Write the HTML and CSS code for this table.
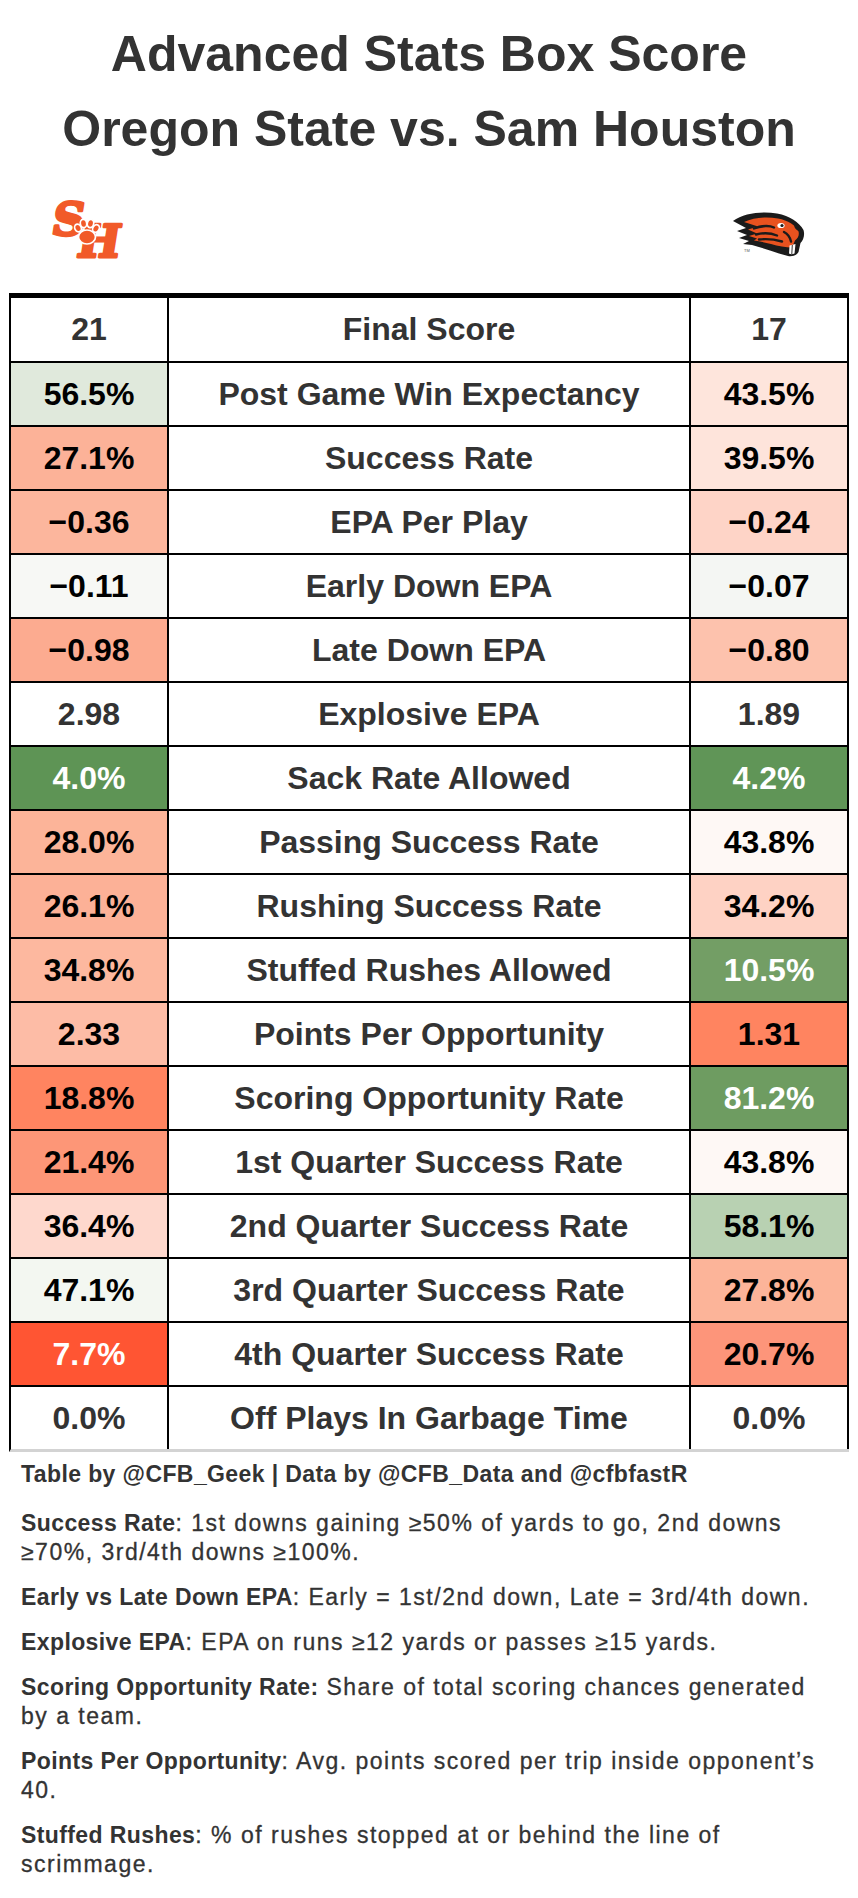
FILE: index.html
```html
<!DOCTYPE html>
<html lang="en">
<head>
<meta charset="utf-8">
<title>Advanced Stats Box Score</title>
<link rel="stylesheet" href="styles.css">
</head>
<body>
<div class="page">
  <h1 class="title">Advanced Stats Box Score<br>Oregon State vs. Sam Houston</h1>

  <div class="logos">
    <svg class="logo-shsu" width="80" height="76" viewBox="0 0 80 76" aria-label="Sam Houston">
      <g transform="skewX(-9)">
        <text x="8" y="43" class="logo-letter" font-size="45">S</text>
        <text x="37" y="65" class="logo-letter" font-size="45">H</text>
      </g>
      <g fill="#f15a29" stroke="#fff" stroke-width="1.7">
        <ellipse cx="38" cy="45" rx="8.5" ry="7"/>
        <ellipse cx="29" cy="36" rx="3.2" ry="4" transform="rotate(-25 29 36)"/>
        <ellipse cx="34.5" cy="31.5" rx="3.2" ry="4.2" transform="rotate(-8 34.5 31.5)"/>
        <ellipse cx="41.5" cy="31.5" rx="3.2" ry="4.2" transform="rotate(10 41.5 31.5)"/>
        <ellipse cx="47" cy="36.5" rx="3.2" ry="4" transform="rotate(28 47 36.5)"/>
      </g>
    </svg>

    <svg class="logo-osu" width="73" height="45" viewBox="0 0 73 45" aria-label="Oregon State">
      <path fill="#1b1b1b" d="M1,9 C12,1 30,-1 45,1.5 C58,4 67,10 71.5,18 C73,23 71.5,28 68.5,31 L66.5,40 C64.5,43.5 60,44.8 56,44 C50,42.5 44,40.5 38,38.5 C32,36.5 26,34.5 20,33 L11,32 L17,29 L7,26 L15,23 L5,19 L14,16 Z"/>
      <path fill="#e8521f" d="M12,10 C22,5.5 34,4.5 46,6.5 C56,8.5 63.5,13 66.5,19.5 C67.5,23 66,26 63,28.5 L60,35.5 C54,35.5 46,34 39,32 C33,30.3 27,29.3 22,28.5 L25,26.5 L17,24 L25,21.5 L16,17.5 L26,14.5 Z"/>
      <path fill="none" stroke="#1b1b1b" stroke-width="2.4" stroke-linecap="round" d="M22,16.5 C30,13.5 38,13.5 42,15.5 M24,22.5 C32,20.5 40,21.5 45,23.5 M27,27.5 C35,26.5 43,27.5 50,29.5 M52,20 C56,22 58,25 59,29.5"/>
      <ellipse cx="49" cy="13.5" rx="3.6" ry="2.6" fill="#fff"/>
      <circle cx="50" cy="13.5" r="1.6" fill="#1b1b1b"/>
      <path fill="#1b1b1b" d="M62,14 C66,15 68,17 68.5,19 C66,19 63.5,18 62,14 Z"/>
      <path fill="#fff" d="M57.5,33.5 L63.5,32 L62.5,41.5 C60.5,42.5 58.5,42.5 57,41.5 Z"/>
      <path stroke="#1b1b1b" stroke-width="0.9" d="M60.3,33 L59.8,42"/>
      <text x="12" y="40" class="tm">TM</text>
    </svg>
  </div>

  <div class="box">
    <div class="cell head">21</div>
    <div class="cell head">Final Score</div>
    <div class="cell head">17</div>

    <div class="cell num" style="background:#e0e9dc">56.5%</div>
    <div class="cell">Post Game Win Expectancy</div>
    <div class="cell num" style="background:#fee5dc">43.5%</div>

    <div class="cell num" style="background:#fcb298">27.1%</div>
    <div class="cell">Success Rate</div>
    <div class="cell num" style="background:#fee4db">39.5%</div>

    <div class="cell num" style="background:#fcb69d">−0.36</div>
    <div class="cell">EPA Per Play</div>
    <div class="cell num" style="background:#fed4c7">−0.24</div>

    <div class="cell num" style="background:#f7f8f5">−0.11</div>
    <div class="cell">Early Down EPA</div>
    <div class="cell num" style="background:#f4f6f3">−0.07</div>

    <div class="cell num" style="background:#fcab90">−0.98</div>
    <div class="cell">Late Down EPA</div>
    <div class="cell num" style="background:#fdc2ad">−0.80</div>

    <div class="cell">2.98</div>
    <div class="cell">Explosive EPA</div>
    <div class="cell">1.89</div>

    <div class="cell light" style="background:#5e9455">4.0%</div>
    <div class="cell">Sack Rate Allowed</div>
    <div class="cell light" style="background:#609557">4.2%</div>

    <div class="cell num" style="background:#fcb499">28.0%</div>
    <div class="cell">Passing Success Rate</div>
    <div class="cell num" style="background:#fef8f5">43.8%</div>

    <div class="cell num" style="background:#fcb197">26.1%</div>
    <div class="cell">Rushing Success Rate</div>
    <div class="cell num" style="background:#fed2c4">34.2%</div>

    <div class="cell num" style="background:#fdb89f">34.8%</div>
    <div class="cell">Stuffed Rushes Allowed</div>
    <div class="cell light" style="background:#739e65">10.5%</div>

    <div class="cell num" style="background:#fdbca6">2.33</div>
    <div class="cell">Points Per Opportunity</div>
    <div class="cell num" style="background:#ff8460">1.31</div>

    <div class="cell num" style="background:#ff8460">18.8%</div>
    <div class="cell">Scoring Opportunity Rate</div>
    <div class="cell light" style="background:#6e9c61">81.2%</div>

    <div class="cell num" style="background:#fd9677">21.4%</div>
    <div class="cell">1st Quarter Success Rate</div>
    <div class="cell num" style="background:#fef8f5">43.8%</div>

    <div class="cell num" style="background:#fed8cd">36.4%</div>
    <div class="cell">2nd Quarter Success Rate</div>
    <div class="cell num" style="background:#b8d1b2">58.1%</div>

    <div class="cell num" style="background:#f3f7f1">47.1%</div>
    <div class="cell">3rd Quarter Success Rate</div>
    <div class="cell num" style="background:#fcb499">27.8%</div>

    <div class="cell light" style="background:#ff5533">7.7%</div>
    <div class="cell">4th Quarter Success Rate</div>
    <div class="cell num" style="background:#fd957a">20.7%</div>

    <div class="cell last">0.0%</div>
    <div class="cell last">Off Plays In Garbage Time</div>
    <div class="cell last">0.0%</div>
  </div>

  <div class="notes">
    <p class="credit">Table by @CFB_Geek | Data by @CFB_Data and @cfbfastR</p>
    <p class="first"><b>Success Rate</b>: 1st downs gaining ≥50% of yards to go, 2nd downs ≥70%, 3rd/4th downs ≥100%.</p>
    <p><b>Early vs Late Down EPA</b>: Early = 1st/2nd down, Late = 3rd/4th down.</p>
    <p><b>Explosive EPA</b>: EPA on runs ≥12 yards or passes ≥15 yards.</p>
    <p><b>Scoring Opportunity Rate:</b> Share of total scoring chances generated by a team.</p>
    <p><b>Points Per Opportunity</b>: Avg. points scored per trip inside opponent’s 40.</p>
    <p><b>Stuffed Rushes</b>: % of rushes stopped at or behind the line of scrimmage.</p>
  </div>
</div>
</body>
</html>
```

FILE: styles.css
```css
html, body {
  margin: 0;
  padding: 0;
  background: #fff;
}

body {
  font-family: "Liberation Sans", Arial, sans-serif;
  color: #333;
}

.page {
  width: 858px;
}

.title {
  margin: 0;
  padding-top: 17px;
  font-size: 50px;
  line-height: 75px;
  font-weight: 700;
  text-align: center;
  color: #333;
}

.logos {
  display: flex;
  justify-content: space-between;
  align-items: flex-end;
  margin: 25px 53px 25px 49px;
}

.logos svg {
  display: block;
}

.logo-osu {
  margin-bottom: 11px;
}

.logo-letter {
  font-family: "DejaVu Serif", "Liberation Serif", serif;
  font-weight: 700;
  fill: #f15a29;
  stroke: #f15a29;
  stroke-width: 3px;
  stroke-linejoin: round;
}

.tm {
  font-family: "Liberation Sans", Arial, sans-serif;
  font-size: 4px;
  fill: #555;
}

.box {
  width: 840px;
  margin-left: 9px;
  box-sizing: border-box;
  display: grid;
  grid-template-columns: 158px 1fr 158px;
  border-top: 5px solid #000;
  border-left: 2px solid #000;
  border-bottom: 3px solid #d3d3d3;
}

.cell {
  box-sizing: border-box;
  height: 64px;
  display: flex;
  align-items: center;
  justify-content: center;
  border-right: 2px solid #000;
  border-bottom: 2px solid #000;
  font-size: 32px;
  font-weight: 700;
  color: #333;
  white-space: nowrap;
}

.cell.head {
  height: 65px;
}

.cell.last {
  height: 62px;
  border-bottom: 0;
}

.cell.num {
  color: #000;
}

.cell.light {
  color: #fff;
}

.notes {
  margin: 8px 0 0 21px;
  width: 810px;
  font-size: 23px;
  line-height: 29px;
  color: #333;
  letter-spacing: 1.5px;
  -webkit-text-stroke: 0.3px #333;
}

.notes p {
  margin: 16px 0 0;
}

.notes p.credit {
  margin: 0;
  font-weight: 700;
  letter-spacing: 0.4px;
  -webkit-text-stroke: 0;
}

.notes p.first {
  margin-top: 20px;
}

.notes b {
  font-weight: 700;
  letter-spacing: 0.4px;
  -webkit-text-stroke: 0;
}
```
